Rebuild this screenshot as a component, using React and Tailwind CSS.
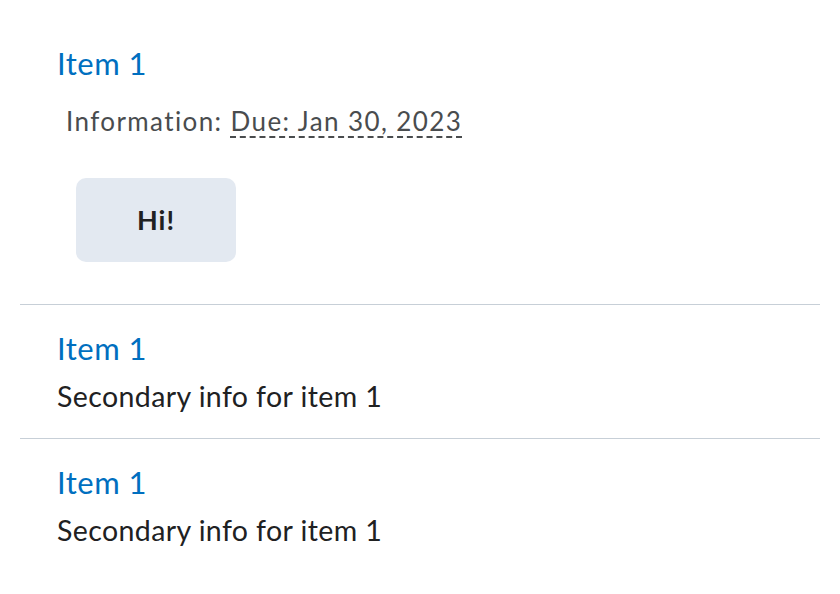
export default function App() {
  return (
    <div className="min-h-screen bg-white px-[20px]" style={{ fontFamily: "Lato, 'Noto Sans', sans-serif" }}>
      <ul className="flex flex-col">
        <li className="px-[37px] pt-[43px] pb-[42px]">
          <div className="text-[31px] leading-[40px] tracking-[0.5px] text-[#006fbf]">Item 1</div>
          <div className="mt-[18px] pl-[9px] text-[26px] leading-[40px] tracking-[1.4px] text-[#494c4e]">
            Information:{" "}
            <span className="underline decoration-dashed decoration-[1.5px] underline-offset-[5px] decoration-[#494c4e]">
              Due: Jan 30, 2023
            </span>
          </div>
          <button className="mt-[37px] ml-[19px] flex h-[84px] w-[160px] items-center justify-center rounded-[10px] bg-[#e3e9f1] text-[27px] font-bold tracking-[1px] text-[#202122]">
            Hi!
          </button>
        </li>
        <li className="border-t border-[#c7cfd7] px-[37px] pt-[23px] pb-[22px]">
          <div className="text-[31px] leading-[40px] tracking-[0.5px] text-[#006fbf]">Item 1</div>
          <div className="mt-[8px] text-[28.5px] leading-[40px] tracking-[0.4px] text-[#202122]">Secondary info for item 1</div>
        </li>
        <li className="border-t border-[#c7cfd7] px-[37px] pt-[23px] pb-[22px]">
          <div className="text-[31px] leading-[40px] tracking-[0.5px] text-[#006fbf]">Item 1</div>
          <div className="mt-[8px] text-[28.5px] leading-[40px] tracking-[0.4px] text-[#202122]">Secondary info for item 1</div>
        </li>
      </ul>
    </div>
  );
}
